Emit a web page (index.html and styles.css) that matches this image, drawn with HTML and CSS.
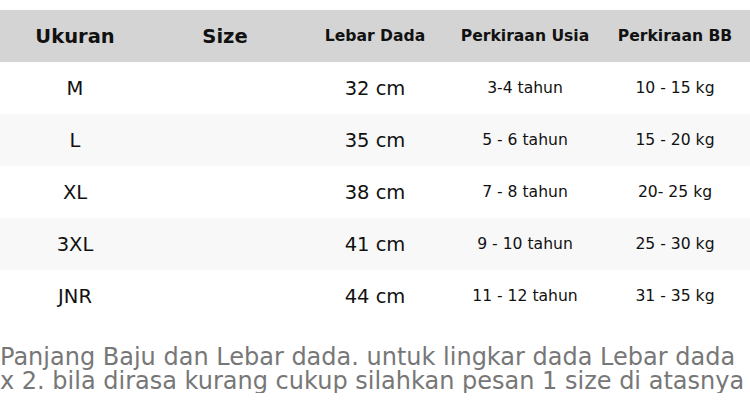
FILE: index.html
```html
<!DOCTYPE html>
<html lang="id">
<head>
<meta charset="utf-8">
<title>Ukuran</title>
<link rel="stylesheet" href="styles.css">
</head>
<body>
<div class="page">
  <table class="size-table">
    <thead>
      <tr>
        <th class="big">Ukuran</th>
        <th class="big">Size</th>
        <th>Lebar Dada</th>
        <th>Perkiraan Usia</th>
        <th>Perkiraan BB</th>
      </tr>
    </thead>
    <tbody>
      <tr><td class="big">M</td><td></td><td class="big">32 cm</td><td>3-4 tahun</td><td>10 - 15 kg</td></tr>
      <tr><td class="big">L</td><td></td><td class="big">35 cm</td><td>5 - 6 tahun</td><td>15 - 20 kg</td></tr>
      <tr><td class="big">XL</td><td></td><td class="big">38 cm</td><td>7 - 8 tahun</td><td>20- 25 kg</td></tr>
      <tr><td class="big">3XL</td><td></td><td class="big">41 cm</td><td>9 - 10 tahun</td><td>25 - 30 kg</td></tr>
      <tr><td class="big">JNR</td><td></td><td class="big">44 cm</td><td>11 - 12 tahun</td><td>31 - 35 kg</td></tr>
    </tbody>
  </table>
  <p class="note">Panjang Baju dan Lebar dada. untuk lingkar dada Lebar dada x 2. bila dirasa kurang cukup silahkan pesan 1 size di atasnya</p>
</div>
</body>
</html>
```

FILE: styles.css
```css
html, body {
  margin: 0;
  padding: 0;
  background: #ffffff;
}

.page {
  padding-top: 10px;
  font-family: "DejaVu Sans", sans-serif;
  color: #111111;
}

.size-table {
  width: 750px;
  table-layout: fixed;
  border-collapse: collapse;
  border-spacing: 0;
}

.size-table th,
.size-table td {
  padding: 0;
  text-align: center;
  vertical-align: middle;
  font-size: 15.6px;
  height: 52px;
}

.size-table th {
  background: #d4d4d4;
  font-weight: bold;
  color: #111111;
}

.size-table .big {
  font-size: 19.5px;
}

.size-table tbody tr:nth-child(even) td {
  background: #f8f8f8;
}

.note {
  margin: 23px 0 0 0;
  font-size: 24px;
  line-height: 24px;
  color: #777777;
}
```
